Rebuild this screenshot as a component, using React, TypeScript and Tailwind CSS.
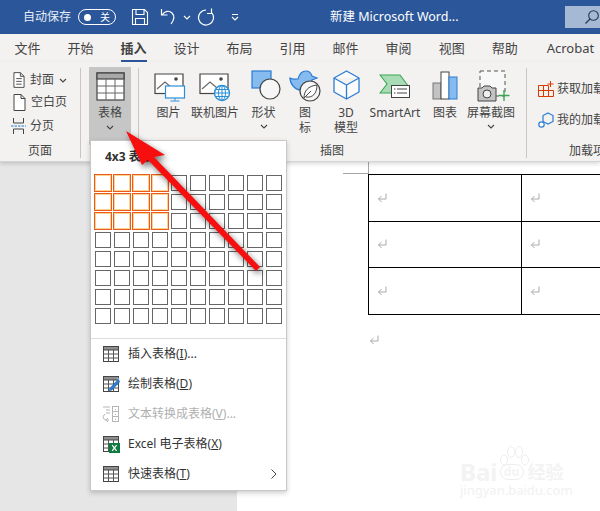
import React from "react";

const FONT = '"Noto Sans", "Noto Sans CJK SC", sans-serif';

function Chevron({ className = "", color = "#444" }: { className?: string; color?: string }) {
  return (
    <svg width="8" height="5" viewBox="0 0 8 5" className={className}>
      <path d="M1 1l3 3 3-3" fill="none" stroke={color} strokeWidth="1.1" />
    </svg>
  );
}

function Sep() {
  return <div className="w-px h-[90px] bg-[#c8c6c4] mt-[6px] shrink-0" />;
}

function MiniTable({ excel = false, pen = false }: { excel?: boolean; pen?: boolean }) {
  return (
    <svg width="18" height="18" viewBox="0 0 18 18" className="shrink-0">
      <rect x="1.5" y="1.5" width="15" height="15" fill="#fff" stroke="#444" />
      <rect x="1.5" y="1.5" width="15" height="3.5" fill="#8f8f8f" stroke="#444" />
      <path d="M1.5 9h15M1.5 13h15M6.5 5v11.5M11.5 5v11.5" stroke="#555" fill="none" />
      {pen && (
        <>
          <path d="M8 13l-1 3 3-1 8-8.5-2-2z" fill="#2b7cd3" stroke="#1e5fa8" strokeWidth="0.5" />
          <path d="M15 2.5l2 2" stroke="#7fb6ea" strokeWidth="1.4" />
        </>
      )}
      {excel && (
        <>
          <rect x="7" y="8" width="11" height="10" fill="#107c41" />
          <path d="M10.2 10.2l4.4 5.6M14.6 10.2l-4.4 5.6" stroke="#fff" strokeWidth="1.2" />
        </>
      )}
    </svg>
  );
}

function ConvertIcon() {
  return (
    <svg width="18" height="18" viewBox="0 0 18 18" className="shrink-0">
      <path d="M1 2h7M4 5h4M4 8h4" stroke="#b5b5b5" fill="none" />
      <path d="M7 15H4a3 3 0 0 1-2-5l1-1M6 13l-2 2 2 2" stroke="#b5b5b5" fill="none" />
      <rect x="10.5" y="1.5" width="6" height="15" fill="none" stroke="#b5b5b5" />
      <path d="M10.5 6.5h6M10.5 11.5h6M13.5 4v1M13.5 9v1M13.5 14v1" stroke="#b5b5b5" />
    </svg>
  );
}

function Para({ className = "" }: { className?: string }) {
  return (
    <svg width="10" height="10" viewBox="0 0 10 10" className={className}>
      <path d="M9 0.5v5.5H1.5M4.5 3L1.5 6l3 3" fill="none" stroke="#aaa" strokeWidth="1" />
    </svg>
  );
}

function Doc() {
  return (
    <svg width="13" height="17" viewBox="0 0 13 17" className="shrink-0">
      <path d="M1 .5h7l4 4v12H1z M8 .5v4h4" fill="#fff" stroke="#444" />
    </svg>
  );
}

function Big({
  w,
  label,
  chevron,
  children,
}: {
  w: string;
  label: React.ReactNode;
  chevron?: boolean;
  children: React.ReactNode;
}) {
  return (
    <div className={`flex flex-col items-center shrink-0 ${w}`}>
      <div className="h-[35px] w-full flex justify-center">{children}</div>
      <div className="text-[12px] leading-[15px] text-[#444] text-center whitespace-nowrap">{label}</div>
      {chevron && <Chevron className="mt-[4px]" />}
    </div>
  );
}

function Row({
  icon,
  children,
  muted,
  arrow,
}: {
  icon: React.ReactNode;
  children: React.ReactNode;
  muted?: boolean;
  arrow?: boolean;
}) {
  return (
    <div className={`h-[30px] flex items-center pl-[11px] pr-[8px] text-[12px] ${muted ? "text-[#b0b0b0]" : "text-[#333]"}`}>
      <span className="w-[26px] shrink-0 flex">{icon}</span>
      <span className="whitespace-nowrap">{children}</span>
      {arrow && (
        <svg width="6" height="10" viewBox="0 0 6 10" className="ml-auto mr-[1px]">
          <path d="M.5.5L5 5 .5 9.5" fill="none" stroke="#444" />
        </svg>
      )}
    </div>
  );
}

function Frame() {
  return (
    <>
      <path d="M1 22V2h28v20" fill="#fff" stroke="#444" strokeWidth="1.2" />
      <path d="M1 21.5h28" stroke="#444" strokeWidth="1.2" />
      <path d="M3 17l8-7 7 6" fill="none" stroke="#666" strokeWidth="1.1" />
      <circle cx="22" cy="7" r="1.8" fill="#444" />
    </>
  );
}

const tabs = ["文件", "开始", "插入", "设计", "布局", "引用", "邮件", "审阅", "视图", "帮助"];

export default function App() {
  const cells = Array.from({ length: 80 }, (_, i) => i);
  return (
    <div className="relative w-[600px] h-[511px] overflow-hidden bg-[#e6e6e6] flex flex-col" style={{ fontFamily: FONT }}>
      {/* Title bar */}
      <div className="h-[34px] bg-[#2b579a] flex items-center text-white shrink-0 relative">
        <span className="ml-[23px] text-[12px] text-[#e8edf5]">自动保存</span>
        <div className="ml-[7px] w-[38px] h-[16px] rounded-full border border-white flex items-center justify-between pl-[5px] pr-[5px]">
          <span className="w-[7px] h-[7px] rounded-full bg-white" />
          <span className="text-[10px] leading-none">关</span>
        </div>
        <svg width="18" height="18" viewBox="0 0 18 18" className="ml-[15px]">
          <path d="M1.5 1.5h12l3 3v12h-15z M5 1.5v5h8v-5M4.5 16.5v-6h9v6" fill="none" stroke="#fff" strokeWidth="1.1" />
        </svg>
        <svg width="18" height="18" viewBox="0 0 18 18" className="ml-[11px]">
          <path d="M1.5 1v6h6M2 7c3-4 7-5 10-2s2 7-1 11" fill="none" stroke="#fff" strokeWidth="1.2" />
        </svg>
        <Chevron className="ml-[5px]" color="#fff" />
        <svg width="18" height="18" viewBox="0 0 18 18" className="ml-[6px]">
          <path d="M9 2a7.5 7.5 0 1 1-6 3M3.5 .5V5.5H8" fill="none" stroke="#fff" strokeWidth="1.2" transform="matrix(-1 0 0 1 18 0)" />
        </svg>
        <svg width="8" height="8" viewBox="0 0 8 8" className="ml-[16px]">
          <path d="M1 1.5h6M1 4l3 3 3-3" fill="none" stroke="#fff" strokeWidth="1.1" />
        </svg>
        <span className="ml-[91px] text-[12.5px] whitespace-nowrap">新建 Microsoft Word...</span>
        <div className="absolute right-0 top-[6px] w-[35px] h-[22px] bg-[#a5b8d4] flex items-center pl-[19px]">
          <svg width="16" height="16" viewBox="0 0 16 16">
            <circle cx="9.5" cy="6.5" r="4.8" fill="none" stroke="#26394f" strokeWidth="1.1" />
            <path d="M6 10l-4.5 4.5" stroke="#26394f" strokeWidth="1.2" />
          </svg>
        </div>
      </div>

      {/* Tabs */}
      <div className="h-[28px] bg-[#f3f2f1] flex items-start gap-[27px] pl-[14.5px] pt-[4px] shrink-0 text-[13px] leading-[20px] text-[#444] whitespace-nowrap">
        {tabs.map((t) => (
          <div key={t} className={`relative h-[24px] ${t === "插入" ? "font-bold text-[#404040]" : ""}`}>
            {t}
            {t === "插入" && <div className="absolute left-0 right-0 bottom-0 h-[2px] bg-[#2b579a]" />}
          </div>
        ))}
        <div className="ml-[2px]">Acrobat</div>
      </div>

      {/* Ribbon */}
      <div className="h-[100px] bg-[#f3f2f1] flex shrink-0 overflow-hidden border-b border-[#d6d4d2] shadow-[0_2px_4px_rgba(0,0,0,0.15)] relative z-10 text-[#444]">
        {/* pages */}
        <div className="w-[80px] shrink-0 flex flex-col pl-[13px] relative">
          <div className="flex items-center gap-[5px] h-[22px] mt-[7px] text-[12px]">
            <svg width="12" height="16" viewBox="0 0 13 17" className="shrink-0">
              <path d="M1 .5h7l4 4v12H1z M8 .5v4h4 M3.5 7h6M3.5 10h6M3.5 13h6" fill="#fff" stroke="#444" />
            </svg>
            <span>封面</span>
            <Chevron />
          </div>
          <div className="flex items-center gap-[5px] h-[22px] text-[12px]">
            <Doc />
            <span>空白页</span>
          </div>
          <div className="flex items-center gap-[5px] h-[26px] text-[12px]">
            <svg width="15" height="16" viewBox="0 0 15 16" className="shrink-0 ml-[-2px]">
              <path d="M2.5 0v5h10V0M2.5 16v-5h10v5" fill="none" stroke="#444" />
              <path d="M0 8h15" stroke="#2b7cd3" strokeDasharray="2.5 1" />
            </svg>
            <span className="ml-[-1px]">分页</span>
          </div>
          <div className="absolute left-[28px] top-[79px] text-[12px] leading-[20px]">页面</div>
        </div>
        <Sep />
        {/* table */}
        <div className="w-[42px] h-[78px] bg-[#c6c6c6] ml-[8px] mt-[5px] shrink-0 flex flex-col items-center pt-[5px]">
          <svg width="29" height="29" viewBox="0 0 29 29">
            <rect x="1" y="1" width="27" height="27" fill="#fff" stroke="#444" strokeWidth="1.2" />
            <rect x="1" y="1" width="27" height="6" fill="#a8a8a8" stroke="#444" strokeWidth="1.2" />
            <path d="M1 14h27M1 21h27M10 7v21M19 7v21" stroke="#666" fill="none" />
          </svg>
          <div className="text-[12px] leading-[15px] mt-[4px]">表格</div>
          <Chevron className="mt-[5px]" />
        </div>
        <div className="w-px h-[90px] bg-[#c8c6c4] mt-[6px] ml-[7px] shrink-0" />
        {/* illustrations */}
        <div className="w-[387px] shrink-0 relative flex pl-[7px] pt-[8px]">
          <Big w="w-[45px]" label="图片">
            <svg width="32" height="30" viewBox="0 0 32 30" className="mt-[2px] ml-[2px]">
              <Frame />
              <rect x="11.5" y="14" width="19" height="12" fill="#fff" stroke="#2b8fd6" strokeWidth="1.2" />
              <path d="M21 26v2.5M16.5 29h9" stroke="#2b8fd6" />
            </svg>
          </Big>
          <Big w="w-[48px]" label="联机图片">
            <svg width="32" height="30" viewBox="0 0 32 30" className="mt-[2px]">
              <Frame />
              <circle cx="23" cy="21" r="7.5" fill="#fff" stroke="#2b8fd6" strokeWidth="1.4" />
              <path d="M15.5 21h15M16.5 17.5h13M16.5 24.5h13M23 13.5v15" stroke="#2b8fd6" fill="none" />
              <ellipse cx="23" cy="21" rx="3.5" ry="7.5" fill="none" stroke="#2b8fd6" />
            </svg>
          </Big>
          <Big w="w-[49px]" label="形状" chevron>
            <svg width="30" height="32" viewBox="0 0 30 32" className="ml-[4px]">
              <rect x="1" y="1" width="19" height="17" fill="#85bbee" stroke="#2b7cd3" strokeWidth="1.2" />
              <circle cx="19" cy="19" r="10" fill="#f6f6f6" stroke="#444" strokeWidth="1.2" />
            </svg>
          </Big>
          <Big
            w="w-[34px]"
            label={
              <>
                图<br />标
              </>
            }
          >
            <svg width="32" height="33" viewBox="0 0 32 33">
              <path d="M1 8c3 2 5 1 8 1 1-4 3-8 8-8 3 0 5 2 6 5l5 2-5 2c0 4-4 10-11 10C6 20 1 14 1 8z" fill="#85bbee" stroke="#2b7cd3" strokeWidth="1.2" />
              <circle cx="21" cy="21" r="10" fill="#f6f6f6" stroke="#444" strokeWidth="1.2" />
              <path d="M15 28c0-7 4-12 13-13 0 8-4 13-11 12M15 28l7-7" fill="#fff" stroke="#444" />
            </svg>
          </Big>
          <Big
            w="w-[48px]"
            label={
              <>
                3D
                <br />
                模型
              </>
            }
          >
            <svg width="27" height="30" viewBox="0 0 27 30">
              <path d="M13.5 1L26 8v14l-12.5 7L1 22V8zM1 8l12.5 7L26 8M13.5 15v14" fill="#fbfbfb" stroke="#2b7cd3" strokeWidth="1.3" strokeLinejoin="round" />
            </svg>
          </Big>
          <Big w="w-[50px]" label="SmartArt">
            <svg width="32" height="26" viewBox="0 0 32 26" className="mt-[4px]">
              <path d="M1 1h20l9 12-2 6H1l7-9z" fill="#a9dcb4" stroke="#3aa655" strokeWidth="1.1" />
              <rect x="12.5" y="11.5" width="18" height="12" fill="#fff" stroke="#444" />
              <path d="M15 15h1.5M18 15h10M15 19h1.5M18 19h10" stroke="#444" />
            </svg>
          </Big>
          <Big w="w-[50px]" label="图表">
            <svg width="26" height="29" viewBox="0 0 26 29" className="mt-[1px]">
              <rect x="1" y="12" width="8" height="16" fill="#c3c3c3" stroke="#777" />
              <rect x="9" y="1" width="8" height="27" fill="#fff" stroke="#444" />
              <rect x="17" y="6" width="8" height="22" fill="#85bbee" stroke="#2b7cd3" />
            </svg>
          </Big>
          <Big w="w-[42px]" label="屏幕截图" chevron>
            <svg width="34" height="32" viewBox="0 0 34 32" className="ml-[6px]">
              <rect x="3" y="1" width="25" height="25" fill="#f8f8f8" stroke="#555" strokeDasharray="4 3" />
              <path d="M1 18h4l2-2h6l2 2h4v13H1z" fill="#c3c3c3" stroke="#444" />
              <circle cx="10" cy="24" r="4" fill="#eee" stroke="#444" />
              <path d="M27 20v11M21.5 25.5h11" stroke="#3aa655" strokeWidth="1.4" />
            </svg>
          </Big>
          <div className="absolute left-[181px] top-[79px] text-[12px] leading-[20px]">插图</div>
        </div>
        <Sep />
        {/* add-ins */}
        <div className="flex-1 relative pl-[11px] pt-[19px] text-[12px] whitespace-nowrap overflow-hidden">
          <div className="flex items-center gap-[3px] h-[16px]">
            <svg width="16" height="16" viewBox="0 0 16 16" className="shrink-0">
              <path d="M.5 4.5h10v11H.5zM.5 9.5h10M5.5 4.5v11M10.5 9.5h5v6h-5" fill="none" stroke="#d83b01" />
              <path d="M12.5 0v6M9.5 3h6" stroke="#d83b01" />
            </svg>
            <span>获取加载项</span>
          </div>
          <div className="flex items-center gap-[3px] h-[16px] mt-[15px]">
            <svg width="16" height="16" viewBox="0 0 16 16" className="shrink-0">
              <path d="M10 1l5 2.5v6L10 12l-5-2.5v-6z" fill="none" stroke="#2b7cd3" strokeWidth="1.2" />
              <circle cx="3.5" cy="12.5" r="2.7" fill="#fff" stroke="#2b7cd3" strokeWidth="1.2" />
            </svg>
            <span>我的加载项</span>
          </div>
          <div className="absolute left-[42px] top-[79px] leading-[20px]">加载项</div>
        </div>
      </div>

      {/* Document */}
      <div className="flex-1 flex min-h-0">
        <div className="w-[237px] shrink-0 bg-[#e6e6e6]" />
        <div className="flex-1 bg-white relative pl-[131px] pt-[12px]">
          <div className="absolute left-[131px] top-0 w-px h-[12px] bg-[#a6a6a6]" />
          <div className="absolute left-[106px] top-[11px] w-[26px] h-px bg-[#a6a6a6]" />
          <div className="w-[240px] border-t border-l border-black grid grid-cols-[153px_1fr]">
            {[46, 45, 46].map((h, r) =>
              [0, 1].map((c) => (
                <div key={`${r}-${c}`} className="border-b border-r border-black flex items-center pl-[8px]" style={{ height: h + 1 }}>
                  <Para className="-mt-[1px]" />
                </div>
              ))
            )}
          </div>
          <Para className="mt-[20px] ml-[1px]" />
          {/* watermark */}
          <div className="absolute left-[223px] top-[284px] w-[110px] h-[50px] text-[#f3f3f3] whitespace-nowrap">
            <svg width="36" height="24" viewBox="0 0 36 24" className="absolute left-[35px] top-0">
              <g fill="none" stroke="#eeeeee" strokeWidth="1">
                <ellipse cx="9" cy="14" rx="3.5" ry="5" />
                <ellipse cx="16" cy="6" rx="3.5" ry="5.5" />
                <ellipse cx="24" cy="6" rx="3.5" ry="5.5" />
                <ellipse cx="30" cy="14" rx="3.5" ry="5" />
              </g>
            </svg>
            <div className="absolute left-0 top-[14px] flex items-center h-[24px] text-[24px] leading-none font-bold">
              <span>Bai</span>
              <span className="w-[24px] h-[16px] rounded-full border border-[#eeeeee] text-[12px] flex items-center justify-center ml-[2px] mr-[4px]">du</span>
              <span className="text-[18px]">经验</span>
            </div>
            <div className="absolute left-0 top-[37px] text-[13px] leading-[14px] text-[#f1f1f1]">jingyan.baidu.com</div>
          </div>
        </div>
      </div>

      {/* Table menu */}
      <div className="absolute left-[90px] top-[140px] w-[197px] h-[351px] bg-white border border-[#c8c8c8] shadow-[0_2px_5px_rgba(0,0,0,0.2)] z-20 flex flex-col">
        <div className="h-[34px] pl-[14px] pt-[6px] text-[12px] leading-[20px] font-bold text-[#333] shrink-0">4x3 表格</div>
        <div className="ml-[4px] grid grid-cols-[repeat(10,16px)] gap-[3px] shrink-0">
          {cells.map((i) => {
            const on = i % 10 < 4 && i < 30;
            return (
              <div
                key={i}
                className={on ? "w-4 h-4 bg-white border border-[#f8d58f] outline outline-1 outline-[#ee5a1e]" : "w-4 h-4 bg-white border border-[#666]"}
              />
            );
          })}
        </div>
        <div className="h-px bg-[#dcdcdc] mt-[14px] shrink-0" />
        <Row icon={<MiniTable />}>
          插入表格(<u>I</u>)...
        </Row>
        <Row icon={<MiniTable pen />}>
          绘制表格(<u>D</u>)
        </Row>
        <Row icon={<ConvertIcon />} muted>
          文本转换成表格(<u>V</u>)...
        </Row>
        <Row icon={<MiniTable excel />}>
          Excel 电子表格(<u>X</u>)
        </Row>
        <Row icon={<MiniTable />} arrow>
          快速表格(<u>T</u>)
        </Row>
      </div>

      {/* Annotation arrow */}
      <svg width="600" height="511" viewBox="0 0 600 511" className="absolute left-0 top-0 z-30 pointer-events-none drop-shadow-[2px_3px_3px_rgba(0,0,0,0.55)]">
        <path d="M126 131L165 155 154 157 260 267 256 271 148 160 142 165z" fill="#f70f0f" />
      </svg>
    </div>
  );
}
